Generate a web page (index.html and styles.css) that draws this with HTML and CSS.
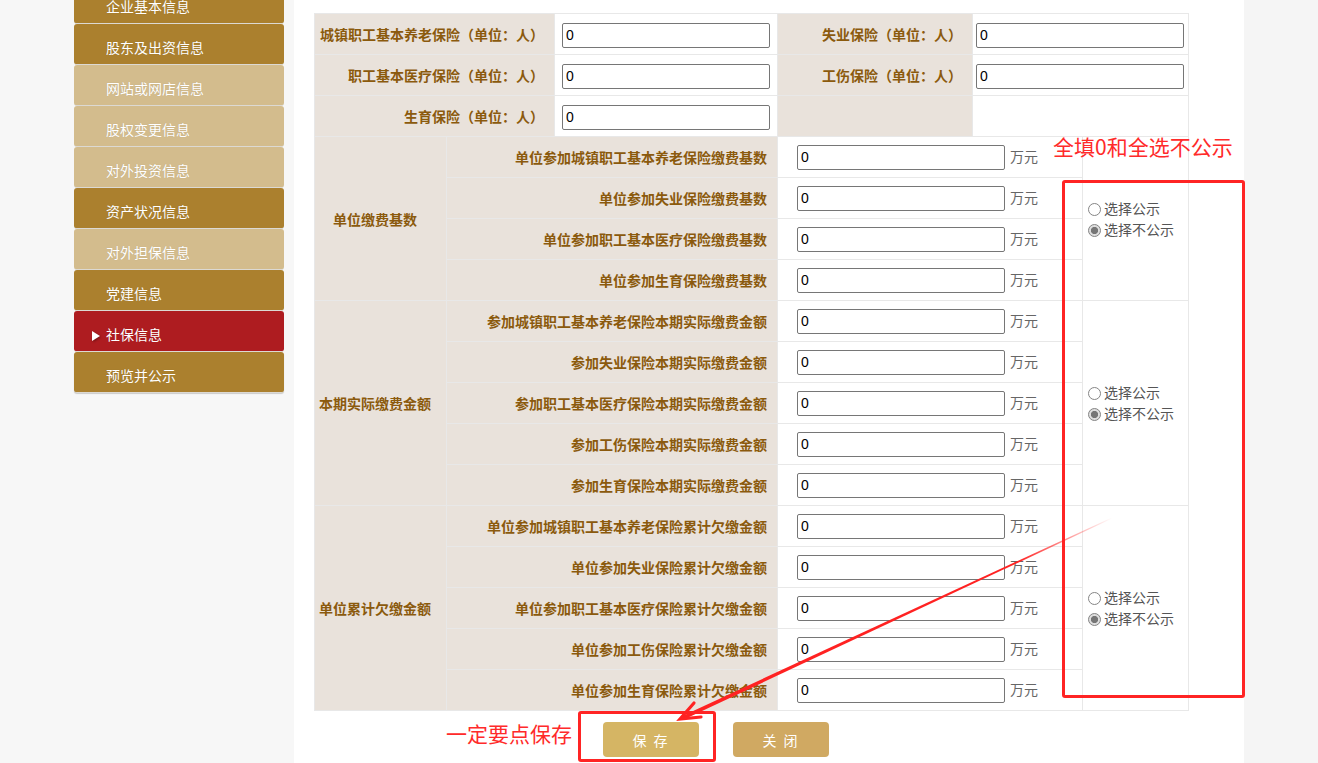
FILE: index.html
```html
<!DOCTYPE html>
<html lang="zh-CN">
<head>
<meta charset="utf-8">
<title>社保信息</title>
<link rel="stylesheet" href="styles.css">
</head>
<body>
<div class="page">
  <aside class="sidebar">
    <ul class="menu">
      <li class="menu-item dark">企业基本信息</li>
      <li class="menu-item dark">股东及出资信息</li>
      <li class="menu-item light">网站或网店信息</li>
      <li class="menu-item light">股权变更信息</li>
      <li class="menu-item light">对外投资信息</li>
      <li class="menu-item dark">资产状况信息</li>
      <li class="menu-item light">对外担保信息</li>
      <li class="menu-item dark">党建信息</li>
      <li class="menu-item active"><span class="tri"></span>社保信息</li>
      <li class="menu-item dark">预览并公示</li>
    </ul>
  </aside>

  <main class="main">
    <table class="form-table top-table">
      <colgroup><col class="c240"><col class="c223"><col class="c195"><col class="c216"></colgroup>
      <tr>
        <td class="label">城镇职工基本养老保险（单位：人）</td>
        <td class="field f8"><input class="txt" type="text" value="0"></td>
        <td class="label">失业保险（单位：人）</td>
        <td class="field f4"><input class="txt" type="text" value="0"></td>
      </tr>
      <tr>
        <td class="label">职工基本医疗保险（单位：人）</td>
        <td class="field f8"><input class="txt" type="text" value="0"></td>
        <td class="label">工伤保险（单位：人）</td>
        <td class="field f4"><input class="txt" type="text" value="0"></td>
      </tr>
      <tr>
        <td class="label">生育保险（单位：人）</td>
        <td class="field f8"><input class="txt" type="text" value="0"></td>
        <td class="label"></td>
        <td class="field"></td>
      </tr>
    </table>

    <table class="form-table bottom-table">
      <colgroup><col class="c132"><col class="c331"><col class="c305"><col class="c106"></colgroup>
      <tr>
        <td class="label group" rowspan="4">单位缴费基数</td>
        <td class="label">单位参加城镇职工基本养老保险缴费基数</td>
        <td class="amount"><div class="amount-wrap"><input class="txt" type="text" value="0"><span class="unit">万元</span></div></td>
        <td class="radios" rowspan="4">
          <label class="radio-line"><input class="rd" type="radio" name="g1">选择公示</label>
          <label class="radio-line"><input class="rd" type="radio" name="g1" checked>选择不公示</label>
        </td>
      </tr>
      <tr>
        <td class="label">单位参加失业保险缴费基数</td>
        <td class="amount"><div class="amount-wrap"><input class="txt" type="text" value="0"><span class="unit">万元</span></div></td>
      </tr>
      <tr>
        <td class="label">单位参加职工基本医疗保险缴费基数</td>
        <td class="amount"><div class="amount-wrap"><input class="txt" type="text" value="0"><span class="unit">万元</span></div></td>
      </tr>
      <tr>
        <td class="label">单位参加生育保险缴费基数</td>
        <td class="amount"><div class="amount-wrap"><input class="txt" type="text" value="0"><span class="unit">万元</span></div></td>
      </tr>

      <tr>
        <td class="label group" rowspan="5">本期实际缴费金额</td>
        <td class="label">参加城镇职工基本养老保险本期实际缴费金额</td>
        <td class="amount"><div class="amount-wrap"><input class="txt" type="text" value="0"><span class="unit">万元</span></div></td>
        <td class="radios" rowspan="5">
          <label class="radio-line"><input class="rd" type="radio" name="g2">选择公示</label>
          <label class="radio-line"><input class="rd" type="radio" name="g2" checked>选择不公示</label>
        </td>
      </tr>
      <tr>
        <td class="label">参加失业保险本期实际缴费金额</td>
        <td class="amount"><div class="amount-wrap"><input class="txt" type="text" value="0"><span class="unit">万元</span></div></td>
      </tr>
      <tr>
        <td class="label">参加职工基本医疗保险本期实际缴费金额</td>
        <td class="amount"><div class="amount-wrap"><input class="txt" type="text" value="0"><span class="unit">万元</span></div></td>
      </tr>
      <tr>
        <td class="label">参加工伤保险本期实际缴费金额</td>
        <td class="amount"><div class="amount-wrap"><input class="txt" type="text" value="0"><span class="unit">万元</span></div></td>
      </tr>
      <tr>
        <td class="label">参加生育保险本期实际缴费金额</td>
        <td class="amount"><div class="amount-wrap"><input class="txt" type="text" value="0"><span class="unit">万元</span></div></td>
      </tr>

      <tr>
        <td class="label group" rowspan="5">单位累计欠缴金额</td>
        <td class="label">单位参加城镇职工基本养老保险累计欠缴金额</td>
        <td class="amount"><div class="amount-wrap"><input class="txt" type="text" value="0"><span class="unit">万元</span></div></td>
        <td class="radios" rowspan="5">
          <label class="radio-line"><input class="rd" type="radio" name="g3">选择公示</label>
          <label class="radio-line"><input class="rd" type="radio" name="g3" checked>选择不公示</label>
        </td>
      </tr>
      <tr>
        <td class="label">单位参加失业保险累计欠缴金额</td>
        <td class="amount"><div class="amount-wrap"><input class="txt" type="text" value="0"><span class="unit">万元</span></div></td>
      </tr>
      <tr>
        <td class="label">单位参加职工基本医疗保险累计欠缴金额</td>
        <td class="amount"><div class="amount-wrap"><input class="txt" type="text" value="0"><span class="unit">万元</span></div></td>
      </tr>
      <tr>
        <td class="label">单位参加工伤保险累计欠缴金额</td>
        <td class="amount"><div class="amount-wrap"><input class="txt" type="text" value="0"><span class="unit">万元</span></div></td>
      </tr>
      <tr>
        <td class="label">单位参加生育保险累计欠缴金额</td>
        <td class="amount"><div class="amount-wrap"><input class="txt" type="text" value="0"><span class="unit">万元</span></div></td>
      </tr>
    </table>

    <div class="actions">
      <button class="btn btn-save" type="button">保 存</button>
      <button class="btn btn-close" type="button">关 闭</button>
    </div>

    <div class="note note-top">全填0和全选不公示</div>
    <div class="mark mark-radios"></div>
    <div class="note note-save">一定要点保存</div>
    <div class="mark mark-save"></div>
    <svg class="arrow" width="950" height="763" viewBox="0 0 950 763" xmlns="http://www.w3.org/2000/svg">
      <defs>
        <linearGradient id="fade" gradientUnits="userSpaceOnUse" x1="818" y1="518" x2="386" y2="719">
          <stop offset="0" stop-color="#ff2222" stop-opacity="0"/>
          <stop offset="0.22" stop-color="#ff2222" stop-opacity="1"/>
          <stop offset="1" stop-color="#ff2222" stop-opacity="1"/>
        </linearGradient>
      </defs>
      <polygon points="818.2,518.5 817.8,517.5 387.2,716.4 388.8,720.0" fill="url(#fade)"/>
      <polyline points="407,717 386,719 400,703" fill="none" stroke="#ff2222" stroke-width="3.2" stroke-linejoin="miter" stroke-linecap="round"/>
    </svg>
  </main>

  <div class="rightside"></div>
</div>
</body>
</html>
```

FILE: styles.css
```css
html, body {
  margin: 0;
  padding: 0;
  height: 100%;
  overflow: hidden;
}

body {
  font-family: "Microsoft YaHei", "Noto Sans CJK SC", sans-serif;
  background: #f7f7f7;
}

.page {
  display: grid;
  grid-template-columns: 294px 950px 1fr;
  min-height: 100vh;
}

/* sidebar */
.sidebar {
  padding-left: 74px;
  background: #f7f7f7;
}

.menu {
  list-style: none;
  margin: -17px 0 0;
  padding: 0;
  width: 210px;
}

.menu-item {
  height: 32px;
  padding: 8px 0 0 32px;
  line-height: 30px;
  font-size: 14px;
  color: #fff;
  border-bottom: 1px solid #dcd9d3;
  border-radius: 3px;
  text-shadow: 0 0 1px rgba(0, 0, 0, 0.15);
}

.menu-item.dark { background: #ab802e; }
.menu-item.light { background: #d3bc8d; }
.menu-item.active { background: #ae1c20; }
.menu-item:last-child { box-shadow: 0 1px 1px rgba(0, 0, 0, 0.18); }

.tri {
  display: inline-block;
  width: 0;
  height: 0;
  margin-left: -14px;
  margin-right: 6px;
  border-top: 5.5px solid transparent;
  border-bottom: 5.5px solid transparent;
  border-left: 8px solid #fff;
  vertical-align: -1px;
  filter: drop-shadow(1px 1px 1px rgba(0, 0, 0, 0.35));
}

/* main */
.main {
  position: relative;
  background: #fff;
  padding: 13px 0 0 20px;
}

.rightside {
  background: #f5f5f5;
}

.form-table {
  width: 874px;
  table-layout: fixed;
  border-collapse: collapse;
}

.bottom-table { margin-top: -1px; }

.c240 { width: 240px; }
.c223 { width: 223px; }
.c195 { width: 195px; }
.c216 { width: 216px; }
.c132 { width: 132px; }
.c331 { width: 331px; }
.c305 { width: 305px; }
.c106 { width: 106px; }

.form-table td {
  border: 1px solid #e8e8e8;
  height: 40px;
  padding: 0;
}

.label {
  background: #e9e2db;
  color: #8b5a0d;
  font-weight: bold;
  font-size: 14px;
  text-align: right;
  padding-right: 10px !important;
  white-space: nowrap;
}

.label.group {
  text-align: center;
  padding-right: 11px !important;
}

.field { background: #fff; }
.f8 { padding-left: 7px !important; }
.f4 { padding-left: 3px !important; }

.amount {
  padding-left: 19px !important;
}

.amount-wrap {
  display: flex;
  align-items: center;
  white-space: nowrap;
}

.txt {
  box-sizing: border-box;
  width: 208px;
  height: 25px;
  margin: 0;
  padding: 0 3px;
  border: 1px solid #767676;
  border-radius: 2px;
  font-family: "Liberation Sans", Arial, sans-serif;
  font-size: 14px;
  color: #000;
  vertical-align: middle;
  background: #fff;
}

.unit {
  margin-left: 5px;
  font-size: 14px;
  line-height: 16px;
  color: #666;
  position: relative;
  top: -1px;
}

.radios {
  vertical-align: middle;
  font-size: 14px;
  color: #555;
}

.radio-line {
  display: block;
  height: 21px;
  line-height: 21px;
  white-space: nowrap;
}

.rd {
  appearance: none;
  -webkit-appearance: none;
  box-sizing: border-box;
  width: 13px;
  height: 13px;
  margin: 0 3px 0 5px;
  border: 1px solid #858585;
  border-radius: 50%;
  background: #fff;
  vertical-align: -2px;
}

.rd:checked {
  background: radial-gradient(circle, #767676 0, #767676 3.3px, #dedede 3.9px);
}

/* buttons */
.actions {
  display: flex;
  gap: 34px;
  padding-left: 289px;
  margin-top: 11px;
}

.btn {
  width: 96px;
  height: 35px;
  border: 0;
  border-radius: 4px;
  color: #fff;
  font-family: "Microsoft YaHei", "Noto Sans CJK SC", sans-serif;
  font-size: 14px;
  letter-spacing: 2px;
  padding: 0;
}

.btn-save { background: #d5b564; }
.btn-close { background: #d0a962; }

/* annotations (overlay) */
.note {
  position: absolute;
  font-size: 21px;
  line-height: 24px;
  color: #ff2a2a;
  white-space: nowrap;
}

.note-top { left: 759px; top: 134px; }
.note-save { left: 152px; top: 721px; }

.mark {
  position: absolute;
  box-sizing: border-box;
  border: 3px solid #ff2424;
  border-radius: 3px;
}

.mark-radios { left: 768px; top: 180px; width: 183px; height: 518px; }
.mark-save { left: 284px; top: 711px; width: 138px; height: 51px; }

.arrow {
  position: absolute;
  left: 0;
  top: 0;
  pointer-events: none;
}
```
